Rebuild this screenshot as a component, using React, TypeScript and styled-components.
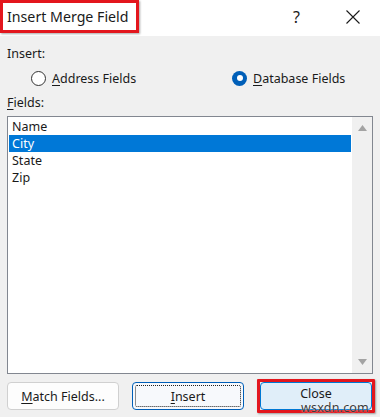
import React from 'react';
import styled, { createGlobalStyle } from 'styled-components';

const GlobalStyle = createGlobalStyle`
  html, body {
    margin: 0;
    padding: 0;
    background: #f0f0f0;
  }
  body {
    font-family: "Noto Sans", "Open Sans", Arial, sans-serif;
    font-size: 12.5px;
    color: #000;
  }
`;

const Dialog = styled.div`
  position: relative;
  width: 380px;
  height: 417px;
  display: flex;
  flex-direction: column;
  background: #f0f0f0;
  overflow: hidden;
`;

const TitleBar = styled.div`
  height: 36px;
  flex-shrink: 0;
  background: #ffffff;
  display: flex;
  align-items: flex-start;
`;

const Highlight = styled.div`
  border: 3px solid #e3161d;
  box-shadow: 1px 1px 2px rgba(0, 0, 0, 0.35);
  box-sizing: border-box;
`;

const TitleBox = styled(Highlight)`
  width: 139px;
  height: 33px;
  display: flex;
  align-items: center;
  padding-left: 4px;
`;

const TitleText = styled.span`
  font-size: 14.2px;
  color: #1a1a1a;
  white-space: nowrap;
`;

const TitleActions = styled.div`
  margin-left: auto;
  height: 34px;
  display: flex;
  align-items: center;
`;

const HelpGlyph = styled.span`
  width: 53px;
  text-align: left;
  font-size: 16px;
  color: #1a1a1a;
`;

const CloseGlyph = styled.span`
  width: 34px;
  display: flex;
  align-items: center;
`;

const Body = styled.div`
  flex: 1;
  display: flex;
  flex-direction: column;
  padding: 9px 7px 0 7px;
`;

const Label = styled.div`
  height: 17px;
  line-height: 17px;
  color: #1a1a1a;
`;

const RadioRow = styled.div`
  display: flex;
  height: 20px;
  align-items: center;
  margin-top: 6px;
  padding-left: 24px;
`;

const RadioOption = styled.label<{ $width: number }>`
  width: ${({ $width }) => $width}px;
  display: flex;
  align-items: center;
  gap: 6px;
  color: #1a1a1a;
`;

const RadioCircle = styled.span<{ $checked?: boolean }>`
  width: 15px;
  height: 15px;
  box-sizing: border-box;
  border-radius: 50%;
  border: ${({ $checked }) => ($checked ? 'none' : '1px solid #333')};
  background: ${({ $checked }) => ($checked ? '#005fb8' : '#fff')};
  display: flex;
  align-items: center;
  justify-content: center;

  &::after {
    content: '';
    display: ${({ $checked }) => ($checked ? 'block' : 'none')};
    width: 6px;
    height: 6px;
    border-radius: 50%;
    background: #fff;
  }
`;

const Key = styled.span`
  text-decoration: underline;
  text-underline-offset: 2px;
`;

const FieldsLabel = styled(Label)`
  margin-top: 6px;
`;

const ListBox = styled.div`
  margin-top: 5px;
  height: 258px;
  box-sizing: border-box;
  border: 1px solid #828790;
  background: #fff;
  display: flex;
`;

const Items = styled.div`
  flex: 1;
  padding: 1px;
`;

const Item = styled.div<{ $selected?: boolean }>`
  height: 17px;
  line-height: 17px;
  padding-left: 3px;
  background: ${({ $selected }) => ($selected ? '#0078d7' : 'transparent')};
  color: ${({ $selected }) => ($selected ? '#fff' : '#1a1a1a')};
`;

const ScrollBar = styled.div`
  width: 20px;
  background: #f0f0f0;
  display: flex;
  flex-direction: column;
  justify-content: space-between;
  align-items: center;
  padding: 8px 0;
`;

const Buttons = styled.div`
  margin-top: 5px;
  display: flex;
  justify-content: space-between;
  align-items: center;
`;

const Button = styled.button<{ $variant?: 'default' | 'focus' | 'hover' }>`
  position: relative;
  width: 112px;
  height: 28px;
  box-sizing: border-box;
  border-radius: 4px;
  font-family: inherit;
  font-size: 12.5px;
  color: #1a1a1a;
  padding: 0;
  border: 1px solid
    ${({ $variant }) => ($variant === 'focus' ? '#005fb8' : $variant === 'hover' ? '#0078d4' : '#d0d0d0')};
  background: ${({ $variant }) =>
    $variant === 'hover' ? '#e0eef9' : $variant === 'focus' ? '#f7f9fc' : '#fdfdfd'};

  &::after {
    content: '';
    display: ${({ $variant }) => ($variant === 'focus' ? 'block' : 'none')};
    position: absolute;
    inset: 2px;
    border: 1px dotted #222;
    border-radius: 2px;
  }
`;

const CloseHighlight = styled(Highlight)`
  padding: 0;
  margin-right: -2px;
  display: flex;
  border-radius: 1px;
`;

const CloseLabel = styled.span`
  position: relative;
  top: -3px;
  line-height: 14px;
`;

const Watermark = styled.span`
  position: absolute;
  right: 11px;
  bottom: 4px;
  font-size: 12.5px;
  line-height: 11px;
  color: #3a3a3a;
  letter-spacing: 0.2px;
  text-shadow: 0 0 2px #fff;
`;

export default function App() {
  return (
    <>
      <GlobalStyle />
      <Dialog>
        <TitleBar>
          <TitleBox>
            <TitleText>Insert Merge Field</TitleText>
          </TitleBox>
          <TitleActions>
            <HelpGlyph>?</HelpGlyph>
            <CloseGlyph>
              <svg width="14" height="14" viewBox="0 0 14 14">
                <path d="M0.5 0.5 L13.5 13.5 M13.5 0.5 L0.5 13.5" stroke="#1a1a1a" strokeWidth="1.1" />
              </svg>
            </CloseGlyph>
          </TitleActions>
        </TitleBar>
        <Body>
          <Label>Insert:</Label>
          <RadioRow>
            <RadioOption $width={201}>
              <RadioCircle />
              <span>
                <Key>A</Key>ddress Fields
              </span>
            </RadioOption>
            <RadioOption $width={130}>
              <RadioCircle $checked />
              <span>
                <Key>D</Key>atabase Fields
              </span>
            </RadioOption>
          </RadioRow>
          <FieldsLabel>
            <Key>F</Key>ields:
          </FieldsLabel>
          <ListBox>
            <Items>
              <Item>Name</Item>
              <Item $selected>City</Item>
              <Item>State</Item>
              <Item>Zip</Item>
            </Items>
            <ScrollBar>
              <svg width="9" height="6" viewBox="0 0 9 6">
                <path d="M4.5 0 L9 6 L0 6 Z" fill="#a3a3a3" />
              </svg>
              <svg width="9" height="6" viewBox="0 0 9 6">
                <path d="M0 0 L9 0 L4.5 6 Z" fill="#a3a3a3" />
              </svg>
            </ScrollBar>
          </ListBox>
          <Buttons>
            <Button>
              <Key>M</Key>atch Fields...
            </Button>
            <Button $variant="focus">
              <Key>I</Key>nsert
            </Button>
            <CloseHighlight>
              <Button $variant="hover">
                <CloseLabel>Close</CloseLabel>
              </Button>
            </CloseHighlight>
          </Buttons>
        </Body>
        <Watermark>wsxdn.com</Watermark>
      </Dialog>
    </>
  );
}
